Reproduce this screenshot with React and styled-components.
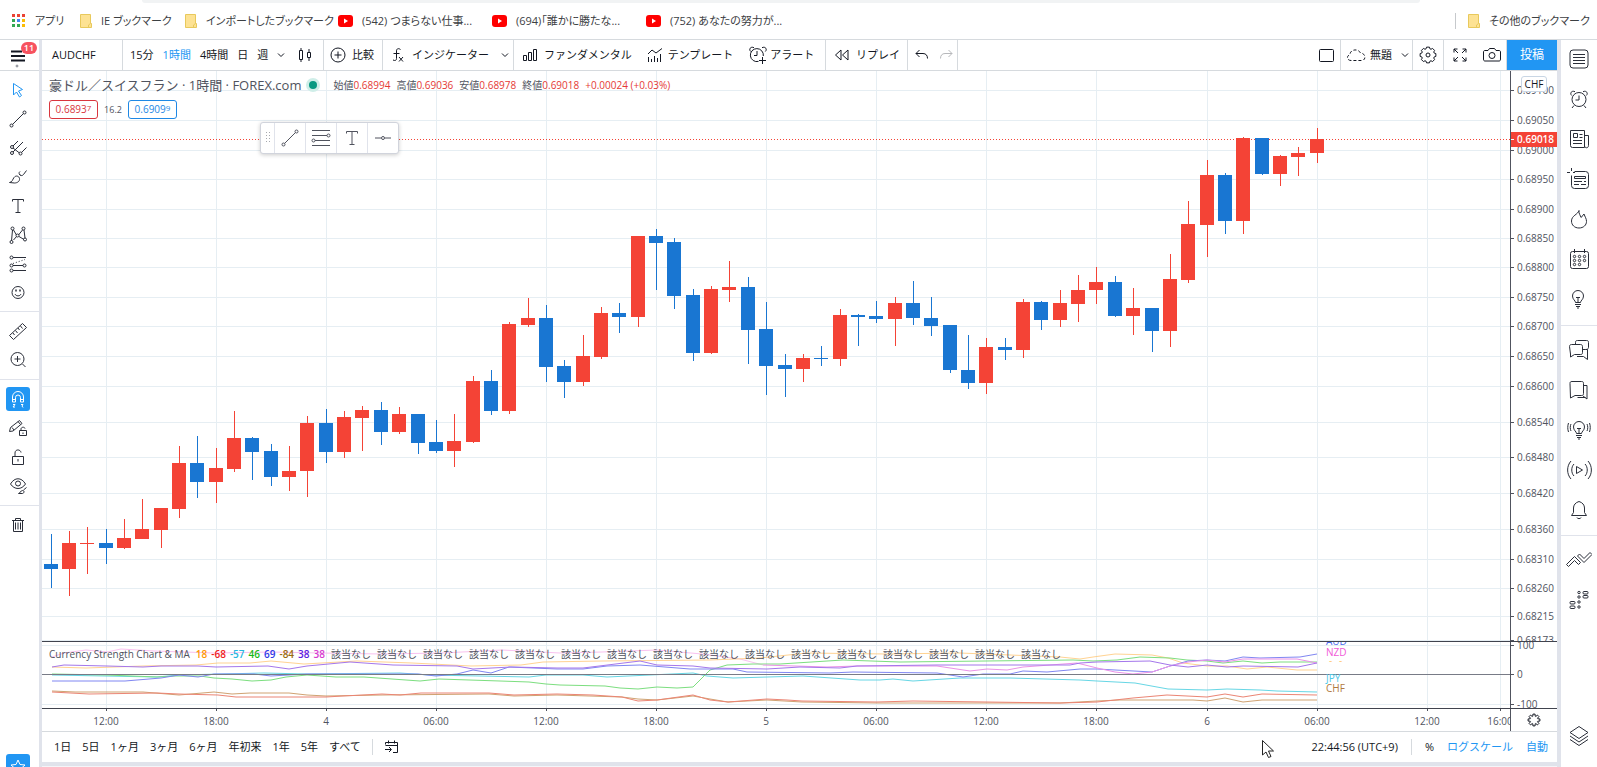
import React, { Fragment } from 'react'
import styled, { createGlobalStyle } from 'styled-components'

const GlobalStyle = createGlobalStyle`
  * {
    box-sizing: border-box;
  }

  body {
    margin: 0;
    background: #fff;
    color: #131722;
    font-family: 'Open Sans', 'Noto Sans CJK JP', sans-serif;
    font-size: 11px;
    line-height: 16px;
  }

  button {
    margin: 0;
    padding: 0;
    border: 0;
    background: none;
    color: inherit;
    font: inherit;
    white-space: nowrap;
    cursor: pointer;
  }
`

const UP = '#f44336'
const DOWN = '#1976d2'
const GRID = '#e6eef3'
const AXIS = '#50535e'
const BLUE = '#2196f3'

const Page = styled.div`
  display: flex;
  flex-direction: column;
  height: 100vh;
  min-height: 600px;
  overflow: hidden;
`

/* ---------- bookmarks ---------- */

const AddressEdge = styled.div`
  flex: none;
  height: 3px;
  margin: 0 177px 0 142px;
  border-radius: 0 0 8px 8px;
  background: #f1f3f4;
`

const Bookmarks = styled.nav`
  display: flex;
  flex: none;
  align-items: center;
  height: 36px;
  padding: 0 12px;
  color: #3c4043;
  font-feature-settings: 'palt';
`

const Bookmark = styled.a`
  display: flex;
  align-items: center;
  gap: 9px;
  width: ${(props) => props.$width}px;
  color: inherit;
  text-decoration: none;
  white-space: nowrap;
  & > svg {
    flex: none;
  }
`

const OtherBookmarks = styled.div`
  margin-left: auto;
  padding-left: 12px;
  border-left: 1px solid #c6c9cc;
`

/* ---------- frame ---------- */

const Body = styled.div`
  display: flex;
  flex: 1;
  min-height: 0;
  border-top: 1px solid #d6dade;
`

const Center = styled.main`
  display: flex;
  flex: 1;
  flex-direction: column;
  min-width: 0;
  border-left: 3px solid #e0e3eb;
  border-right: 4px solid #e0e3eb;
`

const LeftBar = styled.aside`
  display: flex;
  flex: none;
  flex-direction: column;
  width: 39px;
  overflow: hidden;
`

const RightBar = styled.aside`
  display: flex;
  flex: none;
  flex-direction: column;
  width: 36px;
`

const MenuButton = styled.button`
  position: relative;
  flex: none;
  height: 31px;
  padding-left: 9px;
  border-bottom: 1px solid #d6dade;
  text-align: left;
  & > svg {
    display: block;
  }
`

const Badge = styled.span`
  position: absolute;
  top: 2px;
  left: 21px;
  width: 16px;
  height: 12px;
  border-radius: 6px;
  background: #f7525f;
  color: #fff;
  font-size: 9px;
  font-weight: 600;
  line-height: 12px;
  text-align: center;
`

const ToolGroup = styled.div`
  display: flex;
  flex: none;
  flex-direction: column;
  align-items: center;
  padding: ${(props) => props.$pad || '4px 0 5px'};
  border-bottom: ${(props) => (props.$last ? 0 : 1)}px solid #e0e3eb;
`

const ToolButton = styled.button`
  display: flex;
  align-items: center;
  justify-content: center;
  width: 100%;
  height: ${(props) => props.$size || 29}px;
  padding-right: ${(props) => (props.$size ? 0 : 4)}px;
  color: ${(props) => (props.$active ? BLUE : '#2a2e39')};
`

const ToolTile = styled.span`
  display: flex;
  align-items: center;
  justify-content: center;
  width: 24px;
  height: 24px;
  border-radius: 3px;
  background: ${BLUE};
  color: #fff;
`

const StarButton = styled.button`
  flex: none;
  width: 24px;
  margin: auto 0 -11px 6px;
`

const LayersButton = styled(ToolButton)`
  flex: none;
  margin: auto 0 11px;
`

/* ---------- top toolbar ---------- */

const Toolbar = styled.header`
  display: flex;
  flex: none;
  height: 31px;
  border-bottom: 1px solid #d6dade;
`

const Group = styled.div`
  display: flex;
  flex: none;
  align-items: center;
  gap: ${(props) => props.$gap || 0}px;
  width: ${(props) => props.$width}px;
  padding-left: ${(props) => props.$pad || 8}px;
  border-right: 1px solid #d6dade;
`

const Spacer = styled.div`
  flex: 1;
`

const Tool = styled.button`
  display: flex;
  align-items: center;
  gap: ${(props) => props.$gap || 6}px;
  color: ${(props) => (props.$active ? BLUE : '#131722')};
  opacity: ${(props) => (props.disabled ? 0.3 : 1)};
`

const PublishButton = styled.button`
  width: 50px;
  background: ${BLUE};
  color: #fff;
  font-size: 12px;
  height: 30px;
`

/* ---------- chart ---------- */

const PaneRow = styled.section`
  display: flex;
  flex: ${(props) => (props.$height ? 'none' : 1)};
  height: ${(props) => (props.$height ? props.$height + 'px' : 'auto')};
  min-height: 0;
  border-top: ${(props) => (props.$line ? 1 : 0)}px solid #40434e;
`

const Plot = styled.div`
  position: relative;
  flex: 1;
  min-width: 0;
  overflow: hidden;
`

const Canvas = styled.svg`
  display: block;
  width: 100%;
  height: 100%;
`

const PriceAxis = styled.div`
  position: relative;
  flex: none;
  width: 47px;
  overflow: hidden;
  border-left: 1px solid ${AXIS};
`

const AxisText = styled.text`
  fill: ${(props) => props.$color || '#50535e'};
  font-size: 10px;
  font-weight: ${(props) => (props.$bold ? 600 : 400)};
  text-anchor: ${(props) => props.$anchor || 'start'};
`

const CurrencyButton = styled.button`
  position: absolute;
  top: 5px;
  left: 10px;
  width: 26px;
  height: 16px;
  border: 1px solid #c9d6e4;
  border-radius: 3px;
  background: #fff;
  font-size: 10px;
  line-height: 13px;
`

const AxisSettings = styled.button`
  display: flex;
  align-items: center;
  justify-content: center;
  width: 100%;
  height: 100%;
`

const Legend = styled.div`
  position: absolute;
  top: ${(props) => props.$top}px;
  left: 7px;
  display: flex;
  align-items: center;
  color: #50535e;
  font-size: 10px;
  white-space: nowrap;
`

const Title = styled.h1`
  margin: 0;
  color: #50535e;
  font-size: 13px;
  font-weight: 400;
`

const MarketDot = styled.span`
  width: 8px;
  height: 8px;
  margin: 0 16px 0 8px;
  border-radius: 50%;
  background: #089981;
  box-shadow: 0 0 0 3px #cfeee8;
`

const Ohlc = styled.span`
  margin-right: 6px;
  & > b {
    color: #e53935;
    font-weight: 400;
  }
`

const Quote = styled.button`
  width: 49px;
  height: 19px;
  border: 1px solid ${(props) => props.$color};
  border-radius: 3px;
  background: #fff;
  color: ${(props) => props.$color};
  line-height: 17px;
  & > sup {
    font-size: 8px;
    line-height: 8px;
    vertical-align: 2px;
  }
`

const Spread = styled.span`
  width: 30px;
  font-size: 9px;
  text-align: center;
`

const StudyName = styled.span`
  margin-right: 2px;
`

const StudyValue = styled.span`
  margin-left: ${(props) => (props.$color ? 4 : 6)}px;
  color: ${(props) => props.$color};
  font-weight: ${(props) => (props.$color ? 600 : 400)};
`

const Floating = styled.div`
  position: absolute;
  top: 51px;
  left: 218px;
  display: flex;
  height: 32px;
  border: 1px solid #d1d4dc;
  border-radius: 3px;
  background: #fff;
  box-shadow: 0 1px 4px rgba(0, 0, 0, 0.2);
`

const FloatingButton = styled.button`
  display: flex;
  align-items: center;
  justify-content: center;
  width: ${(props) => props.$width || 31}px;
  color: #50535e;
  & + & {
    border-left: 1px solid #e0e3eb;
  }
`

/* ---------- footer ---------- */

const Footer = styled.footer`
  display: flex;
  flex: none;
  align-items: center;
  justify-content: space-between;
  height: 31px;
  padding: 0 9px 0 12px;
  border-top: 1px solid #d6dade;
`

const FooterGroup = styled.div`
  display: flex;
  align-items: center;
  gap: ${(props) => props.$gap}px;
`

const FooterDivider = styled.span`
  width: 1px;
  height: 16px;
  background: #d6dade;
`

const BottomStrip = styled.div`
  flex: none;
  height: 5px;
  border-bottom: 1px solid #f4f5f8;
  background: #e0e3eb;
`

const Pointer = styled.svg`
  position: fixed;
  right: 322px;
  bottom: 8px;
`

/* ---------- icons ---------- */

const Stroke = styled.svg`
  flex: none;
  fill: none;
  stroke: currentColor;
  stroke-width: 1;
`

function Icon({ size = 20, w, children }) {
  return (
    <Stroke width={w || size} height={size} viewBox={`0 0 ${w || size} ${size}`} aria-hidden="true">
      {children}
    </Stroke>
  )
}

const Chevron = () => (
  <Icon size={8}>
    <path d="M1 2.5l3 3 3-3" />
  </Icon>
)

const IconApps = () => (
  <svg width="14" height="14" viewBox="0 0 14 14">
    {['#ea4335', '#ea4335', '#ea4335', '#34a853', '#4285f4', '#fbbc05', '#34a853', '#34a853', '#fbbc05'].map(
      (color, i) => (
        <rect key={i} x={(i % 3) * 5} y={Math.floor(i / 3) * 5} width="3" height="3" fill={color} />
      )
    )}
  </svg>
)

const IconFolder = () => (
  <svg width="12" height="14" viewBox="0 0 12 14">
    <path d="M.5.5h10v9h1v4H.5z" fill="#fde293" stroke="#e8c95c" />
    <path d="M8.500 13.500v-2.500l2-1.500" fill="none" stroke="#e8c95c" />
  </svg>
)

const IconYoutube = () => (
  <svg width="15" height="12" viewBox="0 0 15 12">
    <rect width="15" height="12" rx="3" fill="#f00" />
    <path d="M6 3.500v5l4-2.500z" fill="#fff" />
  </svg>
)

const Clock = ({ plus }) => (
  <>
    <path d={plus ? 'M10.500 16.400A6.500 6.500 0 1 1 15.300 11' : 'M10 3.500a7 7 0 1 1 0 14a7 7 0 0 1 0-14z'} />
    <path d={plus ? 'M9 6v4.500H6' : 'M10 6.500v4.500H6.500'} />
    <path d="M2.700 6.500C.5 4.500 2.500 1 6 2.700M17.300 6.500C19.500 4.500 17.500 1 14 2.700" />
    {plus ? <path d="M14.500 12v7M11 15.500h7" /> : <path d="M5 16.500l-2 2.500M15 16.500l2 2.500" />}
  </>
)

const leftTools = [
  [
    ['カーソル', <path d="M5.500 3.500l9 6-4 1.500 3 4.500-2 1.500-3-5-3 3z" />, true],
    [
      'トレンドライン',
      <>
        <circle cx="3.500" cy="16.500" r="1.500" />
        <circle cx="16.500" cy="3.500" r="1.500" />
        <path d="M4.600 15.400L15.400 4.600" />
      </>,
    ],
    [
      'ピッチフォーク',
      <>
        <path d="M5 8l5-5M5 14l10-10M13.500 14.500l5-5M5 10l6.500 5" />
        <circle cx="4" cy="9" r="1.500" />
        <circle cx="4" cy="15" r="1.500" />
        <circle cx="12.500" cy="15.500" r="1.500" />
      </>,
    ],
    [
      'ブラシ',
      <>
        <path d="M1.500 15.500c3-.5 3-3 4.500-5 2-2.500 5-1.500 5.500 1 .5 3-2.500 4.500-5 4.500z" />
        <path d="M11.500 7c.5 2 3 2 4 .5l3-4M12 4.500c-1.500 1-1 3 .5 4" />
      </>,
    ],
    ['テキスト', <path d="M4.500 5.500v-2h11v2M10 3.500v13M7.500 16.500h5" />],
    [
      'パターン',
      <>
        <path d="M4.500 5l-1 11M5.500 5l3 5M10.500 10l4-5M16 5l1 8M5.500 15l3-3.500M11 11.500l5 3" />
        <circle cx="4.500" cy="3.500" r="1.500" />
        <circle cx="15.500" cy="3.500" r="1.500" />
        <circle cx="9.500" cy="10.500" r="1.500" />
        <circle cx="3.500" cy="17" r="1.500" />
        <circle cx="17" cy="14.500" r="1.500" />
      </>,
    ],
    [
      '予測',
      <>
        <path d="M5 3.500h13M5 11.500h10M5 16.500h13" />
        <path d="M5 9.500l12-4" strokeDasharray="1 2" />
        <circle cx="3.500" cy="3.500" r="1.500" />
        <circle cx="3.500" cy="11.500" r="1.500" />
        <circle cx="3.500" cy="16.500" r="1.500" />
        <circle cx="16.500" cy="11.500" r="1.500" />
      </>,
    ],
    [
      'アイコン',
      <>
        <circle cx="10" cy="9.500" r="6" />
        <path d="M7 11c1 2.500 5 2.500 6 0" />
        <path d="M8 6.500v2M12 6.500v2" strokeWidth="1.500" />
      </>,
    ],
  ],
  [
    ['計測', <path d="M1.500 14.500l13-12 4 4-13 12zM5 12l1.500 2M7.500 9.500l2 2.500M10 7l1.500 2M12.500 5l2 2.500" />],
    [
      'ズーム',
      <>
        <circle cx="9.500" cy="9" r="6.500" />
        <path d="M6.500 9h6M9.500 6v6M14.500 14l3 3" />
      </>,
    ],
  ],
  [
    [
      'マグネット',
      <path d="M4.500 13V8a5.500 5.500 0 0 1 11 0v5h-3V8.500a2.500 2.500 0 0 0-5 0V13zM4.500 10.500h3M12.500 10.500h3M5 15.500h2l-2 2.500h2M13 15.500h2l-1 1.500 1 1.500" />,
      false,
      true,
    ],
    [
      '描画モード',
      <>
        <path d="M1.500 13.500l1-4 9-7 2.500 3-9 7.500zM4 9.500l2 2.500M10 3.500l2.500 3" />
        <path d="M11.500 12.500h7v5h-7zM13 12.500v-1.500c0-2 3.500-2.500 4-.5M15 14.500v1.500" />
      </>,
    ],
    ['ロック', <path d="M4.500 9.500h11v8h-11zM7 9.500V6c0-4 5.500-4 6-.5M10 12v2.500" />],
    [
      '表示',
      <>
        <path d="M2.500 8c4-7 11-7 15 0-4 6-11 6-15 0z" />
        <circle cx="10" cy="7.500" r="2.500" />
        <path d="M10.500 17.500c1.500 0 2-3 4-3s2 2.500 0 3zM15.500 14l3-2.500" />
      </>,
    ],
  ],
  [
    ['削除', <path d="M4 5.500h12M7.500 5.500v-2h5v2M5.500 5.500v11h9v-11M7.500 7.500v7M10 7.500v7M12.500 7.500v7" />],
  ],
]

const Bulb = () => <path d="M8.500 14.500c0-2-3-3-3-6.500a5.500 5.500 0 0 1 11 0c0 3.500-3 4.500-3 6.500zM8 16.500h6M9 18.500h4M10 20h2M9 9.500h4M11 9.500v5" />

const rightTools = [
  [
    [
      'ウォッチリスト',
      <>
        <rect x="2" y="2" width="18" height="18" rx="3" />
        <path d="M5 6.500h12M5 9.500h12M5 12.500h12M5 15.500h12" />
      </>,
    ],
    [
      'アラート一覧',
      <g transform="translate(1 1)">
        <Clock />
      </g>,
    ],
    ['ニュース', <path d="M16.500 19.500h-12a2 2 0 0 1-2-2v-15h14zM16.500 7.500h4v10c0 3-4 3-4 0M5.500 5.500h4v4h-4zM11.500 6.500h3M11.500 9.500h3M5 12.500h9M5 15.500h9" />],
    ['データウィンドウ', <path d="M6.500 3.500h11a3 3 0 0 1 3 3v11a3 3 0 0 1-3 3h-11a3 3 0 0 1-3-3v-10M-1 4.500h3M5 4.500h2M3.500 0v3M6.500 8.500h11v2h-11zM6 13.500h8M16 13.500h2M6 16.500h5M13 16.500h5" />],
    ['ホットリスト', <path d="M11 2.500c-1 4-7.500 5-7.500 10.500 0 4 3 7 7.500 7s7.500-3 7.500-6.500c0-3-1.500-4.500-2.500-7.500-1.500 1.500-2 3-3 3.500-.5-2-2.500-4-2-7z" />],
    [
      'カレンダー',
      <>
        <rect x="2.500" y="3.500" width="18" height="17" rx="2" />
        <path d="M6.500 1v4M16.500 1v4" />
        {[6.5, 11.5, 16.5].map((x) =>
          [8.5, 12.500, 16.5].map((y) => (x > 16 && y > 16 ? null : <circle key={x + '-' + y} cx={x} cy={y} r="1.200" />))
        )}
      </>,
    ],
    ['マイアイデア', <g transform="translate(-1 0)"><Bulb /></g>],
  ],
  [
    ['パブリックチャット', <path d="M1.500 7.500c0-1 .5-2 2-2h9c1.500 0 2 1 2 2v6c0 1.500-.5 2-2 2h-6l-4 2.500v-3zM7.500 5V3.500c0-1.500.5-2 2-2h9c1.500 0 2 .5 2 2v5c0 1.500-1.500 2-3 2h-2.500M17.500 10.500h2v10l-4-3H9" />],
    ['プライベートチャット', <path d="M2 4.500c0-1.500.5-2 2-2h9.500c1.500 0 2 .5 2 2v10c0 1.500-.5 2-2 2H7l-4.500 2.500zM15.500 6.500h3.500v13.500l-4-3M17.500 18.500h-8" />],
    [
      'アイデアストリーム',
      <>
        <Bulb />
        <path d="M3 5c-1 2-1 5 0 7M.5 4c-1 3-1 6 0 9M19 5c1 2 1 5 0 7M21.500 4c1 3 1 6 0 9" />
      </>,
    ],
    ['ストリーム', <path d="M8.500 7.500v7l6-3.500zM6 5c-3 3-3 9 0 12M3 2c-4.500 5-4.500 13 0 18M17 5c3 3 3 9 0 12M20 2c4.500 5 4.500 13 0 18" />],
    ['通知', <path d="M3.500 16.500h15l-2-3V9c0-3-2-5.500-5.500-6.500C7.500 3.500 5.500 6 5.500 9v4.500zM9 18.500c0 1.500 4 1.500 4 0" />],
  ],
  [
    ['注文パネル', <path d="M-1.500 15.500l8-8 6 6-2 2-4-4-6 6zM9.500 7l2-2 4.500 4.500 6-6 2 2-8 8z" />],
    [
      'DOM',
      <>
        {[2.5, 6.500].map((y) => <rect key={y} x="15" y={y} width="5" height="2.500" rx="1" />)}
        {[12.500, 17].map((y) => <rect key={y} x="2" y={y} width="5" height="2.500" rx="1" />)}
        {[3.5, 8, 13, 18].map((y) => <circle key={y} cx="11" cy={y} r="1.200" />)}
      </>,
    ],
  ],
]

// outline of a wheel with eight teeth, centred in an 18px box
const gearOutline = (inner, outer) => {
  const steps = [
    [-0.3, inner],
    [-0.18, outer],
    [0.18, outer],
    [0.3, inner],
  ]
  const points = []
  for (let tooth = 0; tooth < 8; tooth++) {
    steps.forEach(([offset, radius]) => {
      const angle = (tooth * Math.PI) / 4 + offset
      points.push(`${(9 + radius * Math.cos(angle)).toFixed(2)},${(9 + radius * Math.sin(angle)).toFixed(2)}`)
    })
  }
  return points.join(' ')
}

const Gear = ({ small }) => (
  <>
    <polygon points={small ? gearOutline(4, 6) : gearOutline(6.5, 8)} strokeLinejoin="round" />
    {!small && <circle cx="9" cy="9" r="2" />}
  </>
)

/* ---------- data ---------- */

// [isUp, high, bodyTop, bodyBottom, low]
const candles = [
  [0, 463, 493, 498, 517],
  [1, 460, 472, 498, 525],
  [1, 456, 472, 473, 503],
  [0, 458, 472, 477, 493],
  [1, 448, 467, 477, 478],
  [1, 428, 458, 468, 468],
  [1, 437, 437, 459, 477],
  [1, 375, 392, 438, 447],
  [0, 365, 392, 411, 427],
  [1, 377, 397, 411, 432],
  [1, 340, 367, 398, 401],
  [0, 366, 367, 381, 409],
  [0, 373, 380, 406, 415],
  [1, 375, 400, 406, 420],
  [1, 345, 352, 400, 426],
  [0, 338, 352, 381, 392],
  [1, 340, 346, 381, 387],
  [1, 335, 339, 347, 380],
  [0, 331, 339, 361, 374],
  [1, 336, 343, 361, 363],
  [0, 343, 343, 372, 383],
  [0, 349, 371, 380, 382],
  [1, 343, 370, 380, 396],
  [1, 305, 310, 371, 372],
  [0, 299, 310, 340, 344],
  [1, 251, 253, 340, 343],
  [1, 227, 247, 254, 256],
  [0, 234, 247, 296, 311],
  [0, 289, 295, 311, 327],
  [1, 264, 285, 311, 315],
  [1, 236, 242, 286, 288],
  [0, 232, 242, 246, 262],
  [1, 165, 165, 246, 256],
  [0, 158, 165, 172, 219],
  [0, 167, 171, 225, 238],
  [0, 218, 224, 282, 290],
  [1, 215, 218, 282, 283],
  [1, 190, 216, 219, 231],
  [0, 206, 216, 259, 293],
  [0, 231, 258, 295, 324],
  [0, 283, 294, 298, 326],
  [1, 283, 287, 298, 311],
  [0, 275, 287, 288, 295],
  [1, 238, 244, 288, 295],
  [0, 243, 244, 246, 275],
  [0, 230, 245, 248, 252],
  [1, 226, 232, 248, 275],
  [0, 210, 232, 247, 254],
  [0, 226, 247, 255, 265],
  [0, 254, 254, 299, 302],
  [0, 264, 299, 312, 318],
  [1, 267, 276, 312, 323],
  [0, 267, 276, 279, 289],
  [1, 228, 231, 279, 287],
  [0, 230, 231, 249, 259],
  [1, 219, 232, 249, 256],
  [1, 204, 219, 233, 251],
  [1, 196, 211, 219, 233],
  [0, 205, 211, 245, 246],
  [1, 217, 237, 245, 264],
  [0, 237, 237, 260, 281],
  [1, 183, 208, 260, 276],
  [1, 130, 153, 209, 212],
  [1, 89, 104, 154, 186],
  [0, 102, 104, 150, 163],
  [1, 66, 67, 150, 163],
  [0, 67, 67, 103, 104],
  [1, 84, 85, 103, 115],
  [1, 76, 82, 86, 105],
  [1, 57, 68, 82, 92],
]

const prices = [
  ['0.69100', 19],
  ['0.69050', 49],
  ['0.69000', 79],
  ['0.68950', 108],
  ['0.68900', 138],
  ['0.68850', 167],
  ['0.68800', 196],
  ['0.68750', 226],
  ['0.68700', 255],
  ['0.68650', 285],
  ['0.68600', 315],
  ['0.68540', 351],
  ['0.68480', 386],
  ['0.68420', 422],
  ['0.68360', 458],
  ['0.68310', 488],
  ['0.68260', 517],
  ['0.68215', 545],
  ['0.68173', 569],
]

// [label, bar index]
const times = [
  ['12:00', 3],
  ['18:00', 9],
  ['4', 15],
  ['06:00', 21],
  ['12:00', 27],
  ['18:00', 33],
  ['5', 39],
  ['06:00', 45],
  ['12:00', 51],
  ['18:00', 57],
  ['6', 63],
  ['06:00', 69],
  ['12:00', 75],
  ['16:00', 79],
]

const barX = (index) => Math.round(8.5 + index * 18.35)

const strength = [
  ['#f9b8ee', '10,15 22,11 44,8 65,10 79,7 112,9 172,11 229,10 279,11 340,12 400,11 460,8 518,11 560,10 615,8 660,12 698,17 721,23'],
  ['#ffcc80', '10,25 44,26 101,24 154,23 176,21 208,21 229,19 262,22 315,19 370,21 429,24 479,23 501,20 560,19 668,18 718,16 765,11 845,12 918,11 1018,15 1038,17 1051,15 1073,12 1110,13 1126,16 1141,21 1165,24 1185,24 1205,27 1225,25 1255,28 1275,28'],
  ['#4dd0e1', '10,33 115,35 137,33 222,31 265,32 358,31 387,33 437,34 487,35 504,33 541,33 565,35 608,33 651,31 665,34 691,36 761,34 818,38 838,38 851,37 871,39 918,36 968,36 1038,38 1055,39 1093,41 1126,47 1165,48 1185,47 1218,48 1235,49 1275,50'],
  ['#66d96a', '10,32 65,33 115,35 133,34 158,34 172,36 190,37 210,39 229,38 244,35 265,33 294,35 322,35 378,39 397,37 458,39 487,40 504,42 518,43 563,44 578,46 596,47 615,45 635,46 651,45 668,28 685,23 711,22 738,22 801,18 858,20 1031,18 1051,19 1075,18 1098,15 1128,16 1145,18 1165,19 1181,21 1201,19 1220,21 1238,20 1275,20'],
  ['#6a72f0', '10,39 83,39 119,36 137,33 156,35 172,32 212,32 229,34 265,32 376,32 394,34 415,32 431,28 449,31 467,25 515,27 541,27 565,24 598,23 648,27 691,27 705,30 788,31 811,30 895,31 921,35 941,32 968,32 981,29 1005,30 1038,27 1055,27 1110,30 1128,24 1146,19 1165,18 1183,19 1201,15 1218,16 1258,15 1275,12'],
  ['#e880e4', '721,23 785,25 815,24 895,24 928,29 945,27 965,28 981,25 1035,21 1055,26 1073,30 1091,32 1110,30 1128,24 1146,20 1165,18 1183,20 1201,17 1255,17 1275,21'],
  ['#9560e8', '10,25 22,23 65,24 101,25 119,24 156,24 174,25 226,24 247,27 265,24 308,20 351,23 415,24 431,27 469,25 515,26 541,26 598,19 615,23 651,24 668,26 725,27 758,25 798,26 815,24 895,23 1028,23 1038,21 1055,20 1108,19 1128,23 1146,25 1165,23 1185,25 1201,24 1256,25 1275,21'],
  ['#c8935a', '10,49 33,50 101,50 137,53 172,50 190,52 208,51 247,51 265,53 284,54 340,53 447,52 472,54 515,53 580,55 596,57 615,58 651,54 668,57 686,60 725,58 760,60 835,61 1018,61 1055,59 1078,58 1125,58 1151,58 1165,59 1183,56 1201,60 1220,58 1275,58'],
  ['#e8705c', '10,50 47,52 115,51 137,52 176,53 194,55 284,55 301,54 340,52 358,53 379,51 447,51 472,53 515,52 551,53 580,55 596,59 615,58 651,53 668,58 686,60 725,57 745,58 760,59 835,60 871,59 1018,61 1055,60 1091,56 1125,53 1165,55 1183,52 1201,55 1220,52 1275,53'],
]

const studyValues = [
  ['18', '#ff9800'],
  ['-68', '#f02020'],
  ['-57', '#26b6e0'],
  ['46', '#18b818'],
  ['69', '#3038e8'],
  ['-84', '#9a6a10'],
  ['38', '#5b20e0'],
  ['38', '#d63ad0'],
]

const ohlc = [
  ['始値', '0.68994'],
  ['高値', '0.69036'],
  ['安値', '0.68978'],
  ['終値', '0.69018'],
]

const ranges = ['1日', '5日', '1ヶ月', '3ヶ月', '6ヶ月', '年初来', '1年', '5年', 'すべて']

const intervals = ['15分', '1時間', '4時間', '日', '週']

/* ---------- sections ---------- */

function BookmarkBar() {
  return (
    <Bookmarks>
      <Bookmark href="#apps" $width={68}>
        <IconApps />
        アプリ
      </Bookmark>
      <Bookmark href="#ie" $width={105}>
        <IconFolder />
        IE ブックマーク
      </Bookmark>
      <Bookmark href="#imported" $width={153}>
        <IconFolder />
        インポートしたブックマーク
      </Bookmark>
      <Bookmark href="#v542" $width={154}>
        <IconYoutube />
        (542) つまらない仕事...
      </Bookmark>
      <Bookmark href="#v694" $width={154}>
        <IconYoutube />
        (694)「誰かに勝たな...
      </Bookmark>
      <Bookmark href="#v752" $width={154}>
        <IconYoutube />
        (752) あなたの努力が...
      </Bookmark>
      <OtherBookmarks>
        <Bookmark href="#other" $width={117}>
          <IconFolder />
          その他のブックマーク
        </Bookmark>
      </OtherBookmarks>
    </Bookmarks>
  )
}

function LeftTools() {
  return (
    <LeftBar>
      <MenuButton aria-label="メニュー">
        <Icon size={30} w={18}>
          <path d="M2 11.500h11M2 16h14M2 20.500h14" strokeWidth="2" />
          <circle cx="8" cy="26" r="1" fill="#9598a1" stroke="#9598a1" />
        </Icon>
        <Badge>11</Badge>
      </MenuButton>
      {leftTools.map((group, g) => (
        <ToolGroup key={g} $pad={g === 0 ? '4px 0' : ''} $last={g === leftTools.length - 1}>
          {group.map(([name, drawing, active, filled]) => (
            <ToolButton key={name} aria-label={name} $active={active}>
              {filled ? (
                <ToolTile>
                  <Icon>{drawing}</Icon>
                </ToolTile>
              ) : (
                <Icon>{drawing}</Icon>
              )}
            </ToolButton>
          ))}
        </ToolGroup>
      ))}
      <StarButton aria-label="お気に入り">
        <ToolTile>
          <Icon>
            <path d="M10 4l2 4.500 5 .5-4 3.500 1.500 5-4.500-3-4.500 3 1.500-5-4-3.500 5-.5z" />
          </Icon>
        </ToolTile>
      </StarButton>
    </LeftBar>
  )
}

function RightTools() {
  return (
    <RightBar>
      {rightTools.map((group, g) => (
        <ToolGroup key={g} $pad={g === 0 ? '0 0 5px' : '5px 0 4px'} $last={g === rightTools.length - 1}>
          {group.map(([name, drawing]) => (
            <ToolButton key={name} aria-label={name} $size={40}>
              <Stroke width="26" height="24" viewBox="-2 0 26 24">
                {drawing}
              </Stroke>
            </ToolButton>
          ))}
        </ToolGroup>
      ))}
      <LayersButton aria-label="オブジェクトツリー" $size={40}>
        <Icon size={22}>
          <path d="M2 7.500l9-6 9 6-9 6zM2 11l9 6 9-6M2 14.500l9 6 9-6" />
        </Icon>
      </LayersButton>
    </RightBar>
  )
}

function TopToolbar() {
  return (
    <Toolbar>
      <Group $width={81} $pad={10}>
        <Tool>AUDCHF</Tool>
      </Group>
      <Group $width={201} $pad={7} $gap={9}>
        {intervals.map((label) => (
          <Tool key={label} $active={label === '1時間'}>
            {label}
          </Tool>
        ))}
        <Tool aria-label="その他の時間足">
          <Chevron />
        </Tool>
        <Tool aria-label="ローソク足">
          <Icon size={20}>
            <path d="M5.500 5.500h3v9h-3zM7 3v2.500M7 14.500V17M13.500 7.500h3v5h-3zM15 4v3.500M15 12.500V16" />
          </Icon>
        </Tool>
      </Group>
      <Group $width={59} $pad={6}>
        <Tool>
          <Icon size={16}>
            <circle cx="8" cy="8" r="7" />
            <path d="M4.500 8h7M8 4.500v7" />
          </Icon>
          比較
        </Tool>
      </Group>
      <Group $width={131} $gap={12}>
        <Tool $gap={7}>
          <Icon size={16} w={14}>
            <path d="M9.500 2.500c-2-1.500-4-1-4 1.500v7.500c0 2-1.500 2.500-3.500 1.500M2.500 6.500h6M8 10l4 4.500M12 10l-4 4.500" />
          </Icon>
          インジケーター
        </Tool>
        <Tool aria-label="インジケーターメニュー">
          <Chevron />
        </Tool>
      </Group>
      <Group $width={312} $gap={15}>
        <Tool>
          <Icon size={16}>
            <path d="M1.500 8.500h3v5h-3zM6.500 5.500h3v8h-3zM11.500 2.500h3v11h-3z" />
          </Icon>
          ファンダメンタル
        </Tool>
        <Tool $gap={5}>
          <Icon size={16}>
            <path d="M1 7l4-4 4 3 6-4.500M1.500 10v5M4.500 12v3M7.500 9v6M10.500 11v4M13.500 7v8" />
          </Icon>
          テンプレート
        </Tool>
        <Tool $gap={2}>
          <Icon>
            <Clock plus />
          </Icon>
          アラート
        </Tool>
      </Group>
      <Group $width={82}>
        <Tool>
          <Icon size={16}>
            <path d="M7 3v10L1.500 8zM14 3v10L8.500 8z" />
          </Icon>
          リプレイ
        </Tool>
      </Group>
      <Group $width={50} $pad={6} $gap={8}>
        <Tool aria-label="元に戻す">
          <Icon size={16}>
            <path d="M5.500 3L2 6.500 5.500 10M2 6.500h7c3 0 4.500 2 4.500 5" />
          </Icon>
        </Tool>
        <Tool aria-label="やり直す" disabled>
          <Icon size={16}>
            <path d="M10.500 3L14 6.500 10.500 10M14 6.500H7c-3 0-4.500 2-4.500 5" />
          </Icon>
        </Tool>
      </Group>
      <Spacer />
      <Group $width={31} $pad={8}>
        <Tool aria-label="レイアウト">
          <Icon size={16}>
            <rect x="1.500" y="2.500" width="14" height="12" rx="1" />
          </Icon>
        </Tool>
      </Group>
      <Group $width={72} $pad={5} $gap={9}>
        <Tool $gap={4}>
          <Icon size={16} w={20}>
            <path d="M5 13.500C1 13.500 0 9 4 7.500c0-5 8-6.500 10.500-1.500 5 0 6 7 1.500 7.500z" strokeDasharray="3 2" />
          </Icon>
          無題
        </Tool>
        <Tool aria-label="レイアウトメニュー">
          <Chevron />
        </Tool>
      </Group>
      <Group $width={31} $pad={6}>
        <Tool aria-label="設定">
          <Icon size={18}>
            <Gear />
          </Icon>
        </Tool>
      </Group>
      <Group $width={63} $pad={8} $gap={14}>
        <Tool aria-label="全画面">
          <Icon size={16}>
            <path d="M6 6L2 2M2 5.500V2h3.500M10 6l4-4M10.500 2H14v3.500M6 10l-4 4M2 10.500V14h3.500M10 10l4 4M14 10.500V14h-3.500" />
          </Icon>
        </Tool>
        <Tool aria-label="スナップショット">
          <Icon size={16} w={20}>
            <path d="M3 3.500h3l1.500-2h5l1.500 2h3c1 0 1.500.5 1.500 1.500v7c0 1.500-.5 2-1.500 2H3c-1 0-1.500-.5-1.500-2V5c0-1 .5-1.500 1.500-1.500z" />
            <circle cx="10" cy="8.500" r="3" />
          </Icon>
        </Tool>
      </Group>
      <PublishButton>投稿</PublishButton>
    </Toolbar>
  )
}

function TimeGrid() {
  return times.map(([, index]) => (
    <rect key={index} x={barX(index)} y="0" width="1" height="100%" fill={GRID} />
  ))
}

function MainPane() {
  return (
    <PaneRow>
      <Plot>
        <Canvas shapeRendering="crispEdges">
          <TimeGrid />
          {prices.map(([label, y]) => (
            <rect key={label} x="0" y={y} width="100%" height="1" fill={GRID} />
          ))}
          <line x1="0" x2="100%" y1="68.500" y2="68.500" stroke={UP} strokeDasharray="1 2" />
          {candles.map(([up, high, top, bottom, low], i) => (
            <Fragment key={i}>
              <rect x={barX(i)} y={high} width="1" height={low - high} fill={up ? UP : DOWN} />
              <rect x={barX(i) - 7} y={top} width="14" height={bottom - top} fill={up ? UP : DOWN} />
            </Fragment>
          ))}
        </Canvas>
        <Legend $top={6}>
          <Title>豪ドル／スイスフラン · 1時間 · FOREX.com</Title>
          <MarketDot />
          {ohlc.map(([name, value]) => (
            <Ohlc key={name}>
              {name}
              <b>{value}</b>
            </Ohlc>
          ))}
          <Ohlc>
            <b>+0.00024 (+0.03%)</b>
          </Ohlc>
        </Legend>
        <Legend $top={29}>
          <Quote $color="#d9363e">
            0.6893<sup>7</sup>
          </Quote>
          <Spread>16.2</Spread>
          <Quote $color="#1e88e5">
            0.6909<sup>9</sup>
          </Quote>
        </Legend>
        <Floating>
          <FloatingButton aria-label="移動" $width={13}>
            <Icon size={16} w={6}>
              <path d="M1.500 2v12M4.500 2v12" strokeDasharray="1 2" opacity="0.5" />
            </Icon>
          </FloatingButton>
          <FloatingButton aria-label="トレンドラインを描く">
            <Icon>{leftTools[0][1][1]}</Icon>
          </FloatingButton>
          <FloatingButton aria-label="フィボナッチ">
            <Icon>
              <path d="M1 2.500h18M1 7.500h15M4 12.500h15M1 17.500h18" />
              <circle cx="17.500" cy="7.500" r="1.500" />
              <circle cx="2.500" cy="12.500" r="1.500" />
            </Icon>
          </FloatingButton>
          <FloatingButton aria-label="テキストを描く">
            <Icon>{leftTools[0][4][1]}</Icon>
          </FloatingButton>
          <FloatingButton aria-label="水平線">
            <Icon>
              <path d="M2 10h6M12 10h6" />
              <circle cx="10" cy="10" r="1.500" />
            </Icon>
          </FloatingButton>
        </Floating>
      </Plot>
      <PriceAxis>
        <Canvas>
          {prices.map(([label, y]) => (
            <Fragment key={label}>
              <rect x="0" y={y} width="3" height="1" fill={AXIS} />
              <AxisText x="6" y={y + 4}>
                {label}
              </AxisText>
            </Fragment>
          ))}
          <rect x="0" y="61" width="46" height="15" fill={UP} />
          <rect x="0" y="68" width="3" height="1" fill="#fff" />
          <AxisText x="6" y="72" $color="#fff" $bold>
            0.69018
          </AxisText>
        </Canvas>
        <CurrencyButton>CHF</CurrencyButton>
      </PriceAxis>
    </PaneRow>
  )
}

function StrengthPane() {
  return (
    <PaneRow $height={67} $line>
      <Plot>
        <Canvas>
          <TimeGrid />
          <rect x="0" y="3" width="100%" height="1" fill={GRID} />
          <rect x="0" y="62" width="100%" height="1" fill={GRID} />
          <g fill="none" opacity="0.85">
            {strength.map(([color, points]) => (
              <polyline key={color} points={points} stroke={color} />
            ))}
          </g>
          <rect x="0" y="32" width="100%" height="1" fill="#787b86" />
          <AxisText x="1284" y="3" $color="#4a6cf0">
            AUD
          </AxisText>
          <AxisText x="1284" y="14" $color="#f05ad8">
            NZD
          </AxisText>
          <AxisText x="1287" y="22" $color="#ffc870">
            -
          </AxisText>
          <AxisText x="1297" y="22" $color="#ffc870">
            -
          </AxisText>
          <AxisText x="1284" y="40" $color="#4dc8ea">
            JPY
          </AxisText>
          <AxisText x="1284" y="50" $color="#b07a40">
            CHF
          </AxisText>
        </Canvas>
        <Legend $top={4}>
          <StudyName>Currency Strength Chart &amp; MA</StudyName>
          {studyValues.map(([value, color], i) => (
            <StudyValue key={i} $color={color}>
              {value}
            </StudyValue>
          ))}
          {Array.from({ length: 16 }, (_, i) => (
            <StudyValue key={i}>該当なし</StudyValue>
          ))}
        </Legend>
      </Plot>
      <PriceAxis>
        <Canvas>
          {[
            ['100', 3],
            ['0', 32],
            ['-100', 62],
          ].map(([label, y]) => (
            <Fragment key={label}>
              <rect x="0" y={y} width="3" height="1" fill={AXIS} />
              <AxisText x="6" y={y + 4}>
                {label}
              </AxisText>
            </Fragment>
          ))}
        </Canvas>
      </PriceAxis>
    </PaneRow>
  )
}

function TimeScale() {
  return (
    <PaneRow $height={23} $line>
      <Plot>
        <Canvas>
          {times.map(([label, index]) => (
            <Fragment key={index}>
              <rect x={barX(index)} y="0" width="1" height="2" fill={AXIS} />
              <AxisText x={barX(index)} y="16" $anchor="middle">
                {label}
              </AxisText>
            </Fragment>
          ))}
        </Canvas>
      </Plot>
      <PriceAxis>
        <AxisSettings aria-label="スケール設定">
          <Icon size={18}>
            <Gear small />
          </Icon>
        </AxisSettings>
      </PriceAxis>
    </PaneRow>
  )
}

function BottomBar() {
  return (
    <Footer>
      <FooterGroup $gap={11}>
        {ranges.map((label) => (
          <Tool key={label}>{label}</Tool>
        ))}
        <FooterDivider />
        <Tool aria-label="日付へ移動">
          <Icon size={16}>
            <path d="M1.500 5.500v-2h12v10H9M4.500 1.500v3M10.500 1.500v3M1.500 6.500h12M1 10.500h6M5 8l2.500 2.500L5 13" />
          </Icon>
        </Tool>
      </FooterGroup>
      <FooterGroup $gap={13}>
        <Tool>22:44:56 (UTC+9)</Tool>
        <FooterDivider />
        <Tool>%</Tool>
        <Tool $active>ログスケール</Tool>
        <Tool $active>自動</Tool>
      </FooterGroup>
    </Footer>
  )
}

export default function App() {
  return (
    <Page>
      <GlobalStyle />
      <AddressEdge />
      <BookmarkBar />
      <Body>
        <LeftTools />
        <Center>
          <TopToolbar />
          <MainPane />
          <StrengthPane />
          <TimeScale />
          <BottomBar />
          <BottomStrip />
        </Center>
        <RightTools />
      </Body>
      <Pointer width="14" height="20" viewBox="0 0 14 20">
        <path d="M1.500 1.500v14.500l3.500-3 2.500 5.500 2.500-1-2.500-5.500h5z" fill="#fff" stroke="#222" />
      </Pointer>
    </Page>
  )
}
